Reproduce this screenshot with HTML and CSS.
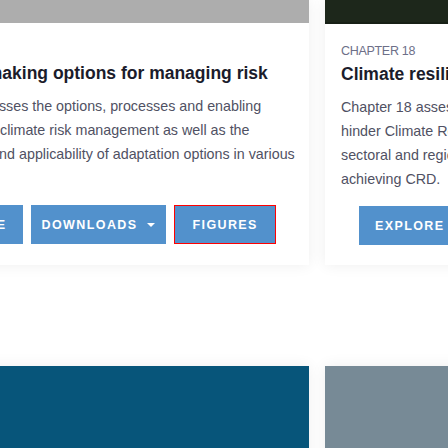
FILE: index.html
```html
<!DOCTYPE html>
<html>
<head>
<meta charset="utf-8">
<link rel="stylesheet" href="styles.css">
</head>
<body>
<div class="grid">
  <div class="card">
    <div class="cover cover-gray"></div>
    <div class="body body-lead">
      <div class="label">CHAPTER 17</div>
      <h2 class="title">Decision-making options for managing risk</h2>
      <p class="desc"><span class="ln ln-a">Chapter 17 assesses the options, processes and enabling</span><span class="ln ln-b">conditions for climate risk management as well as the</span><span class="ln ln-c">effectiveness and applicability of adaptation options in various</span><span class="ln">contexts.</span></p>
    </div>
    <div class="actions">
      <a class="btn">Explore</a>
      <a class="btn btn-drop">Downloads <span class="caret"></span></a>
      <a class="btn btn-focus">Figures</a>
    </div>
  </div>
  <div class="card">
    <div class="cover cover-dark"></div>
    <div class="body">
      <div class="label">CHAPTER 18</div>
      <h2 class="title">Climate resilient development pathways</h2>
      <p class="desc"><span class="ln">Chapter 18 assesses the enabling conditions that facilitate or</span><span class="ln">hinder Climate Resilient Development, with a focus on</span><span class="ln">sectoral and regional development pathways towards</span><span class="ln">achieving CRD.</span></p>
    </div>
    <div class="actions">
      <a class="btn">Explore</a>
    </div>
  </div>
  <div class="card">
    <div class="cover cover-blue"></div>
  </div>
  <div class="card">
    <div class="cover cover-slate"></div>
  </div>
</div>
</body>
</html>
```
FILE: styles.css
```css
html, body {
  margin: 0;
  padding: 0;
  background: #fff;
  overflow: hidden;
  width: 448px;
  height: 448px;
}
body {
  font-family: "Liberation Sans", Arial, sans-serif;
  color: #4f5060;
}
.grid {
  display: grid;
  grid-template-columns: 422px 422px;
  column-gap: 16px;
  row-gap: 101px;
  margin-left: -113px;
  width: 860px;
}
.card {
  background: #fff;
  box-shadow: 0 0 14px rgba(0, 0, 0, 0.07);
  display: flex;
  flex-direction: column;
  padding-bottom: 20px;
}
.cover { height: 23px; }
.cover-gray { background: #adadad; }
.cover-dark { background: #1d271b; border-bottom: 2px solid #172016; height: 22px; }
.cover-blue { background: #07557a; height: 120px; }
.cover-slate { background: #778a96; height: 120px; }
.body {
  padding: 19px 16px 0 16px;
}
.body-lead {
  padding-left: 21px;
}
.label {
  font-size: 12.5px;
  line-height: 16px;
  color: #6d6f88;
  letter-spacing: -0.3px;
}
.title {
  margin: 3px 0 0 0;
  font-size: 17.5px;
  line-height: 24px;
  font-weight: 700;
  color: #1b1c2b;
  white-space: nowrap;
}
.desc {
  margin: 9px 0 0 0;
  font-size: 14.3px;
  line-height: 24px;
  color: #505163;
  white-space: nowrap;
}
.ln { display: block; }
.ln-a { margin-left: -14px; }
.ln-b { margin-left: 3px; }
.ln-c { margin-left: -4px; }
.actions {
  display: flex;
  gap: 8px;
  padding: 15px 34px 0 34px;
}
.btn {
  display: flex;
  align-items: center;
  gap: 10px;
  height: 39px;
  box-sizing: border-box;
  padding: 0 16px;
  background: #5291cc;
  color: #fff;
  font-size: 12.5px;
  font-weight: 700;
  letter-spacing: 1.4px;
  text-transform: uppercase;
}
.btn-drop { padding: 0 11px; }
.btn-focus { border: 1px solid #ff0000; padding: 0 17px; }
.caret {
  width: 0;
  height: 0;
  border-left: 4px solid transparent;
  border-right: 4px solid transparent;
  border-top: 4px solid #fff;
}
```
